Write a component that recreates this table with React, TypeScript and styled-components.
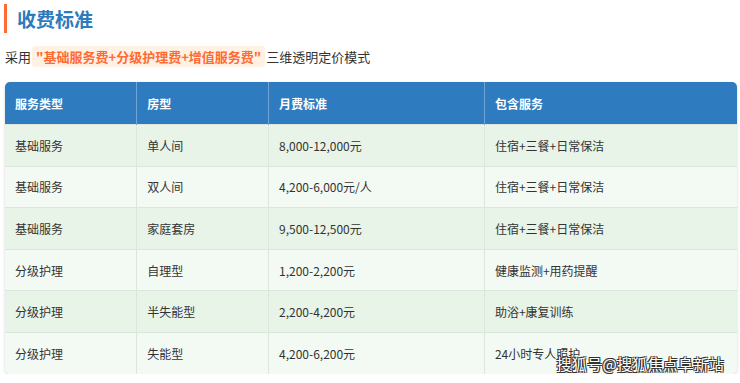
import styled, { createGlobalStyle } from 'styled-components'

const GlobalStyle = createGlobalStyle`
  html, body {
    margin: 0;
    padding: 0;
    background: #ffffff;
  }
  body {
    font-family: "Liberation Sans", "Noto Sans CJK SC", sans-serif;
    color: #333333;
  }
`

const rows = [
  ['基础服务', '单人间', '8,000-12,000元', '住宿+三餐+日常保洁'],
  ['基础服务', '双人间', '4,200-6,000元/人', '住宿+三餐+日常保洁'],
  ['基础服务', '家庭套房', '9,500-12,500元', '住宿+三餐+日常保洁'],
  ['分级护理', '自理型', '1,200-2,200元', '健康监测+用药提醒'],
  ['分级护理', '半失能型', '2,200-4,200元', '助浴+康复训练'],
  ['分级护理', '失能型', '4,200-6,200元', '24小时专人照护'],
]

const headers = ['服务类型', '房型', '月费标准', '包含服务']

function App() {
  return (
    <Page>
      <GlobalStyle />
      <Title>收费标准</Title>
      <Intro>
        采用<Highlight>"基础服务费+分级护理费+增值服务费"</Highlight>三维透明定价模式
      </Intro>
      <TableWrap>
        <Table>
          <colgroup>
            <col style={{ width: '18%' }} />
            <col style={{ width: '18%' }} />
            <col style={{ width: '29.5%' }} />
            <col />
          </colgroup>
          <thead>
            <tr>
              {headers.map((h) => (
                <HeadCell key={h}>{h}</HeadCell>
              ))}
            </tr>
          </thead>
          <tbody>
            {rows.map((r, i) => (
              <Row key={i} $odd={i % 2 === 0}>
                {r.map((c, j) => (
                  <Cell key={j}>{c}</Cell>
                ))}
              </Row>
            ))}
          </tbody>
        </Table>
        <Watermark>搜狐号@搜狐焦点阜新站</Watermark>
      </TableWrap>
    </Page>
  )
}

export default App

const Page = styled.div`
  padding: 4px 3px 0 5px;
  width: 732px;
`

const Title = styled.h2`
  margin: 0;
  padding: 0 0 0 10px;
  border-left: 3px solid #ff6b35;
  margin-left: -1px;
  height: 29px;
  line-height: 29px;
  font-size: 19px;
  font-weight: 700;
  color: #2b7bbd;
  font-family: "Noto Sans CJK SC", sans-serif;
`

const Intro = styled.p`
  margin: 14px 0 0 0;
  font-size: 13px;
  line-height: 20px;
  color: #333333;
  font-family: "Noto Sans CJK SC", sans-serif;
`

const Highlight = styled.span`
  background: #fff1e4;
  color: #ff6b35;
  font-weight: 700;
  padding: 1px 4px;
  border-radius: 3px;
  margin: 0 1px;
`

const TableWrap = styled.div`
  position: relative;
  margin-top: 15px;
  border-radius: 5px;
  overflow: hidden;
  box-shadow: 0 1px 3px rgba(0, 0, 0, 0.18);
`

const Table = styled.table`
  width: 100%;
  border-collapse: collapse;
  table-layout: fixed;
  font-family: "Noto Sans CJK SC", sans-serif;
  font-size: 12px;
`

const HeadCell = styled.th`
  background: #2e7cbf;
  color: #ffffff;
  font-weight: 700;
  text-align: left;
  height: 42px;
  padding: 0 10px;
  border-right: 1px solid #6fa6d6;
  &:last-child {
    border-right: none;
  }
`

const Row = styled.tr<{ $odd: boolean }>`
  background: ${(p) => (p.$odd ? '#e8f4e8' : '#f3faf3')};
  border-top: 1px solid #dde6dd;
`

const Cell = styled.td`
  height: 40.6px;
  padding: 0 10px;
  color: #333333;
  border-right: 1px solid #dde6dd;
  &:last-child {
    border-right: none;
  }
`

const Watermark = styled.div`
  position: absolute;
  right: 13px;
  bottom: 0;
  font-family: "Noto Sans CJK SC", sans-serif;
  font-size: 15px;
  line-height: 20px;
  letter-spacing: 0.3px;
  color: #ffffff;
  text-shadow: -1px -1px 0 #333, 1px -1px 0 #333, -1px 1px 0 #333, 1px 1px 0 #333;
`
